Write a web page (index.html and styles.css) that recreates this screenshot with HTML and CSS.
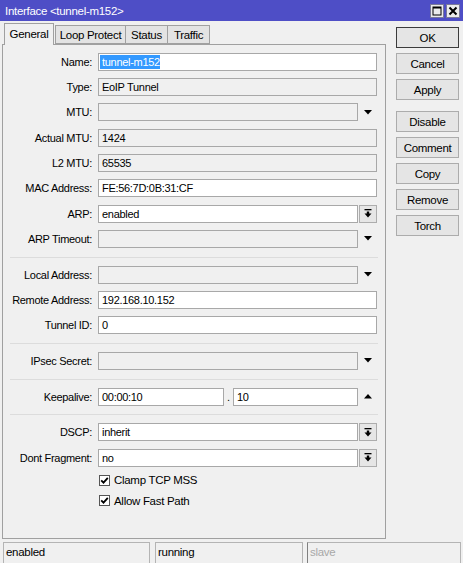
FILE: index.html
```html
<!DOCTYPE html>
<html>
<head>
<meta charset="utf-8">
<link rel="stylesheet" href="styles.css">
</head>
<body>
<div class="window">
  <div class="titlebar">
    <span class="title">Interface &lt;tunnel-m152&gt;</span>
    <div class="tb-btns">
      <span class="tb-btn"><svg width="12" height="12" viewBox="0 0 12 12"><rect x="2" y="2" width="8" height="8" fill="none" stroke="#000" stroke-width="1"/><rect x="2" y="2" width="8" height="1.5" fill="#000"/></svg></span>
      <span class="tb-btn"><svg width="12" height="12" viewBox="0 0 12 12"><path d="M2.5 2.5 L9.5 9.5 M9.5 2.5 L2.5 9.5" stroke="#000" stroke-width="2"/></svg></span>
    </div>
  </div>
  <div class="main">
    <div class="left">
      <div class="tabs">
        <div class="tab active">General</div>
        <div class="tab first">Loop Protect</div>
        <div class="tab">Status</div>
        <div class="tab">Traffic</div>
      </div>
      <div class="panel">
        <div class="row"><span class="label">Name:</span><div class="field"><span class="sel">tunnel-m152</span></div></div>
        <div class="row"><span class="label">Type:</span><div class="field ro">EoIP Tunnel</div></div>
        <div class="row"><span class="label">MTU:</span><div class="field short ro"></div><span class="dd"><svg width="8" height="5" viewBox="0 0 8 5"><polygon points="0,0 8,0 4,4.5" fill="#000"/></svg></span></div>
        <div class="row"><span class="label">Actual MTU:</span><div class="field ro">1424</div></div>
        <div class="row"><span class="label">L2 MTU:</span><div class="field ro">65535</div></div>
        <div class="row"><span class="label">MAC Address:</span><div class="field">FE:56:7D:0B:31:CF</div></div>
        <div class="row"><span class="label">ARP:</span><div class="field short">enabled</div><span class="abtn"><svg width="8" height="9" viewBox="0 0 8 9"><rect x="0.5" y="0" width="7" height="1.3" fill="#000"/><rect x="2.8" y="2.5" width="2.4" height="2.5" fill="#000"/><polygon points="0.5,4.5 7.5,4.5 4,8.5" fill="#000"/></svg></span></div>
        <div class="row"><span class="label">ARP Timeout:</span><div class="field short ro"></div><span class="dd"><svg width="8" height="5" viewBox="0 0 8 5"><polygon points="0,0 8,0 4,4.5" fill="#000"/></svg></span></div>
        <div class="sep"></div>
        <div class="row"><span class="label">Local Address:</span><div class="field short ro"></div><span class="dd"><svg width="8" height="5" viewBox="0 0 8 5"><polygon points="0,0 8,0 4,4.5" fill="#000"/></svg></span></div>
        <div class="row"><span class="label">Remote Address:</span><div class="field">192.168.10.152</div></div>
        <div class="row"><span class="label">Tunnel ID:</span><div class="field">0</div></div>
        <div class="sep"></div>
        <div class="row"><span class="label">IPsec Secret:</span><div class="field short ro"></div><span class="dd"><svg width="8" height="5" viewBox="0 0 8 5"><polygon points="0,0 8,0 4,4.5" fill="#000"/></svg></span></div>
        <div class="sep"></div>
        <div class="row"><span class="label">Keepalive:</span><div class="field half1">00:00:10</div><span class="dot">.</span><div class="field half2">10</div><span class="dd"><svg width="8" height="5" viewBox="0 0 8 5"><polygon points="0,4.5 8,4.5 4,0" fill="#000"/></svg></span></div>
        <div class="sep"></div>
        <div class="row"><span class="label">DSCP:</span><div class="field short">inherit</div><span class="abtn"><svg width="8" height="9" viewBox="0 0 8 9"><rect x="0.5" y="0" width="7" height="1.3" fill="#000"/><rect x="2.8" y="2.5" width="2.4" height="2.5" fill="#000"/><polygon points="0.5,4.5 7.5,4.5 4,8.5" fill="#000"/></svg></span></div>
        <div class="row"><span class="label">Dont Fragment:</span><div class="field short">no</div><span class="abtn"><svg width="8" height="9" viewBox="0 0 8 9"><rect x="0.5" y="0" width="7" height="1.3" fill="#000"/><rect x="2.8" y="2.5" width="2.4" height="2.5" fill="#000"/><polygon points="0.5,4.5 7.5,4.5 4,8.5" fill="#000"/></svg></span></div>
        <div class="check"><span class="cbox"><svg width="9" height="9" viewBox="0 0 9 9"><path d="M1.2 4.3 L3.5 6.6 L7.8 1.8" fill="none" stroke="#000" stroke-width="1.8"/></svg></span><span>Clamp TCP MSS</span></div>
        <div class="check"><span class="cbox"><svg width="9" height="9" viewBox="0 0 9 9"><path d="M1.2 4.3 L3.5 6.6 L7.8 1.8" fill="none" stroke="#000" stroke-width="1.8"/></svg></span><span>Allow Fast Path</span></div>
      </div>
    </div>
    <div class="actions">
      <div class="btn default">OK</div>
      <div class="btn">Cancel</div>
      <div class="btn">Apply</div>
      <div class="btn gap">Disable</div>
      <div class="btn">Comment</div>
      <div class="btn">Copy</div>
      <div class="btn">Remove</div>
      <div class="btn">Torch</div>
    </div>
  </div>
  <div class="statusbar">
    <div class="cell c1">enabled</div>
    <div class="cell c2">running</div>
    <div class="cell c3">slave</div>
  </div>
</div>
</body>
</html>
```

FILE: styles.css
```css
body {
  margin: 0;
  background: #f0f0f0;
  font-family: "Liberation Sans", Arial, sans-serif;
  font-size: 11px;
  letter-spacing: -0.3px;
  color: #000;
}
.window {
  width: 463px;
  height: 563px;
  display: flex;
  flex-direction: column;
  overflow: hidden;
  background: #f0f0f0;
}
.titlebar {
  height: 21px;
  flex: none;
  background: #4e4ec6;
  display: flex;
  align-items: center;
  padding: 0 3px 0 5px;
  color: #fff;
}
.title {
  font-size: 11.5px;
}
.tb-btns {
  margin-left: auto;
  display: flex;
  gap: 2px;
}
.tb-btn {
  width: 14px;
  height: 14px;
  box-sizing: border-box;
  background: #ececec;
  border: 1px solid #7a7a9a;
  display: flex;
  align-items: center;
  justify-content: center;
}
.main {
  display: flex;
  height: 518px;
  flex: none;
}
.left {
  width: 384px;
  margin-left: 2px;
  padding-top: 3px;
  display: flex;
  flex-direction: column;
}
.tabs {
  display: flex;
  align-items: flex-end;
  height: 21px;
  padding-left: 2px;
  position: relative;
  z-index: 1;
  margin-bottom: -1px;
}
.tab {
  box-sizing: border-box;
  height: 19px;
  border: 1px solid #a0a0a0;
  border-left: none;
  background: #e3e3e3;
  display: flex;
  align-items: center;
  justify-content: center;
  font-size: 11.5px;
  margin-bottom: 1px;
  width: 42px;
}
.tab.first {
  border-left: 1px solid #a0a0a0;
  width: 71px;
  margin-left: 1px;
}
.tab.active {
  height: 22px;
  width: 50px;
  border-left: 1px solid #a0a0a0;
  border-bottom: none;
  background: #f0f0f0;
  margin-bottom: 0;
  padding-bottom: 2px;
}
.panel {
  flex: 1;
  border: 1px solid #a0a0a0;
  padding: 4px 7px 0 0;
}
.row {
  display: flex;
  align-items: center;
  height: 25.333px;
}
.label {
  width: 89px;
  margin-right: 6px;
  text-align: right;
  flex: none;
  white-space: nowrap;
}
.field {
  box-sizing: border-box;
  height: 18px;
  width: 279px;
  border: 1px solid #a8a8a8;
  background: #fff;
  padding-left: 3px;
  line-height: 16px;
  white-space: nowrap;
  overflow: hidden;
  flex: none;
}
.field.ro {
  background: #f0f0f0;
}
.field.short {
  width: 260px;
}
.field.half1 {
  width: 126px;
}
.field.half2 {
  width: 125px;
}
.dot {
  width: 9px;
  text-align: center;
  flex: none;
}
.sel {
  display: inline-block;
  background: #3399ff;
  color: #fff;
  line-height: 14px;
  margin-left: -2px;
  padding-left: 2px;
  vertical-align: top;
  margin-top: 1px;
}
.dd {
  width: 19px;
  display: flex;
  justify-content: center;
  align-items: center;
  flex: none;
}
.abtn {
  box-sizing: border-box;
  width: 18px;
  height: 18px;
  margin-left: 1px;
  border: 1px solid #adadad;
  background: #e6e6e6;
  display: flex;
  justify-content: center;
  align-items: center;
  flex: none;
}
.sep {
  height: 5px;
  border-bottom: 1px solid #dcdcdc;
  margin: 0 0 4.333px 7px;
}
.check {
  height: 20.333px;
  display: flex;
  align-items: center;
  padding-left: 96px;
  font-size: 11.5px;
}
.cbox {
  box-sizing: border-box;
  width: 11px;
  height: 11px;
  border: 1px solid #555;
  background: #fff;
  margin-right: 4px;
  display: flex;
  align-items: center;
  justify-content: center;
}
.actions {
  margin-left: 10px;
  padding-top: 6px;
  display: flex;
  flex-direction: column;
}
.btn {
  box-sizing: border-box;
  width: 63px;
  height: 21px;
  margin-bottom: 5px;
  border: 1px solid #acacac;
  background: #e5e5e5;
  display: flex;
  align-items: center;
  justify-content: center;
  font-size: 11.5px;
}
.btn.default {
  border-color: #3c3c3c;
}
.btn.gap {
  margin-top: 6px;
}
.statusbar {
  display: flex;
  height: 20px;
  margin-top: 3px;
  flex: none;
}
.cell {
  box-sizing: border-box;
  height: 21px;
  border: 1px solid #b4b4b4;
  border-bottom: none;
  padding-left: 2px;
  line-height: 18px;
  font-size: 11.5px;
}
.c1 {
  margin-left: 3px;
  width: 147px;
}
.c2 {
  margin-left: 5px;
  width: 148px;
}
.c3 {
  margin-left: 4px;
  width: 154px;
  color: #a8a8a8;
  border-left-color: #808080;
}
```
